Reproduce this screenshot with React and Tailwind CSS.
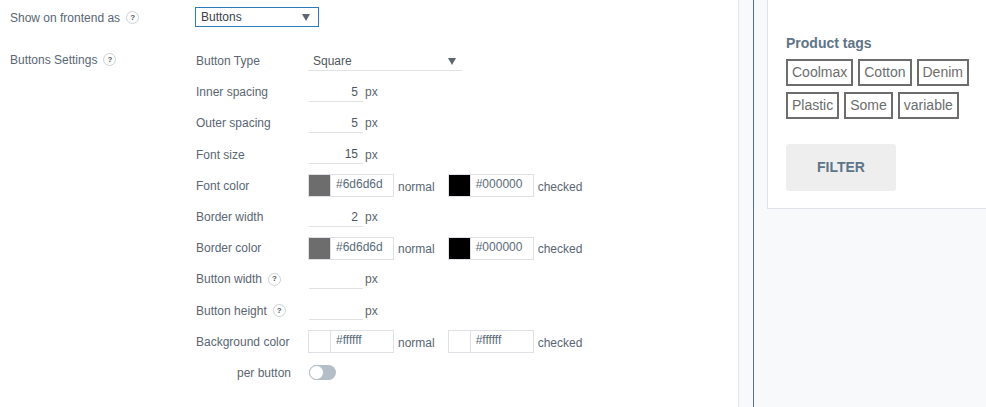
import React from "react";

const Help = () => (
  <span className="inline-flex items-center justify-center w-[13px] h-[13px] rounded-full border border-[#cdd2d6] bg-white text-[8px] font-bold leading-none text-[#50575e] ml-[6px]">
    ?
  </span>
);

const Row = ({ children, label, right }) => (
  <div className="flex items-center h-[31.2px]">
    <div className={`w-[113px] flex items-center ${right ? "justify-end pr-[18px]" : ""}`}>{label}</div>
    <div className="flex items-center">{children}</div>
  </div>
);

const NumInput = ({ value }) => (
  <div className="flex items-center">
    <div className="relative w-[54px] h-[20px] mt-[3px]">
      <div className="h-[16px] pr-[5px] text-right text-[12px] leading-[16px] text-[#50575e]">{value}</div>
      <div className="absolute left-0 right-0 top-[17px] h-px bg-[#dfe3e6]" />
    </div>
    <span className="ml-[2px] text-[12px] text-[#5a6673]">px</span>
  </div>
);

const Color = ({ swatch, value, label }) => (
  <div className="flex items-center">
    <div className="flex h-[23px] w-[86px] border border-[#dde1e5] bg-white">
      <div className="w-[22px] h-full border-r border-[#dde1e5]" style={{ background: swatch }} />
      <div className="pl-[5px] text-[12px] leading-[19px] text-[#5a6b7a]">{value}</div>
    </div>
    <span className="ml-[4px] mt-[2px] text-[12px] text-[#5a6673]">{label}</span>
  </div>
);

const Pair = ({ a, b, va, vb }) => (
  <div className="flex items-center -ml-[1px]">
    <Color swatch={a} value={va} label="normal" />
    <div className="w-[13px]" />
    <Color swatch={b} value={vb} label="checked" />
  </div>
);

const Tag = ({ children }) => (
  <span className="inline-flex items-center h-[27px] px-[4px] border-2 border-[#6d6d6d] text-[14px] text-[#6d6d6d] bg-white">
    {children}
  </span>
);

export default function App() {
  return (
    <div className="w-[986px] h-[407px] overflow-hidden flex bg-white font-['Liberation_Sans',Arial,sans-serif] text-[12px] text-[#5a6673]">
      <div className="w-[738px] shrink-0 pl-[10px] pt-[7px]">
        <div className="flex items-center h-[20px]">
          <div className="w-[185px] flex items-center pt-[1px]">
            <span>Show on frontend as</span>
            <Help />
          </div>
          <div className="relative w-[124px] h-[20px] border border-[#2b7db9] flex items-center pl-[5px] text-[12px] text-[#3c434a]">
            Buttons
            <span className="absolute right-[8px] top-[6px] w-0 h-0 border-l-[4px] border-r-[4px] border-t-[7px] border-l-transparent border-r-transparent border-t-[#5c6670]" />
          </div>
        </div>
        <div className="flex mt-[18.5px]">
          <div className="w-[186px] pt-[5px] flex items-start">
            <span className="flex items-center">
              Buttons Settings
              <Help />
            </span>
          </div>
          <div className="flex flex-col">
            <Row label="Button Type">
              <div className="relative w-[154px] h-[20px] ml-[-1px] mt-[3px]">
                <div className="pl-[5px] text-[12px] leading-[16px] text-[#50575e]">Square</div>
                <span className="absolute right-[6px] top-[5px] w-0 h-0 border-l-[4px] border-r-[4px] border-t-[7px] border-l-transparent border-r-transparent border-t-[#5c6670]" />
                <div className="absolute left-0 right-0 top-[17px] h-px bg-[#dfe3e6]" />
              </div>
            </Row>
            <Row label="Inner spacing"><NumInput value="5" /></Row>
            <Row label="Outer spacing"><NumInput value="5" /></Row>
            <Row label="Font size"><NumInput value="15" /></Row>
            <Row label="Font color"><Pair a="#6d6d6d" b="#000000" va="#6d6d6d" vb="#000000" /></Row>
            <Row label="Border width"><NumInput value="2" /></Row>
            <Row label="Border color"><Pair a="#6d6d6d" b="#000000" va="#6d6d6d" vb="#000000" /></Row>
            <Row label={<span className="flex items-center">Button width<Help /></span>}><NumInput value="" /></Row>
            <Row label={<span className="flex items-center">Button height<Help /></span>}><NumInput value="" /></Row>
            <Row label="Background color"><Pair a="#ffffff" b="#ffffff" va="#ffffff" vb="#ffffff" /></Row>
            <Row label="per button" right>
              <div className="relative w-[27px] h-[15px] rounded-full bg-[#b4bec6]">
                <div className="absolute left-0 top-0 w-[15px] h-[15px] rounded-full bg-white border border-[#b4bec6]" />
              </div>
            </Row>
          </div>
        </div>
      </div>
      <div className="flex-1 flex border-l border-[#e4e7ea] bg-[#f7f9fa]">
        <div className="w-[14px] shrink-0" />
        <div className="w-px bg-[#5d7184] shrink-0" />
        <div className="w-[13px] shrink-0" />
        <div className="flex-1 h-[209px] bg-white border-l border-b border-[#dde3e8] pl-[18px] pt-[33px]">
          <div className="text-[14px] font-bold text-[#5e7487]">Product tags</div>
          <div className="mt-[5px] w-[185px] flex flex-wrap gap-x-[5px] gap-y-[6px]">
            <Tag>Coolmax</Tag>
            <Tag>Cotton</Tag>
            <Tag>Denim</Tag>
            <Tag>Plastic</Tag>
            <Tag>Some</Tag>
            <Tag>variable</Tag>
          </div>
          <div className="mt-[25px] w-[110px] h-[47px] rounded-[3px] bg-[#eeeeee] flex items-center justify-center text-[14px] font-bold text-[#5e7487]">
            FILTER
          </div>
        </div>
      </div>
    </div>
  );
}
